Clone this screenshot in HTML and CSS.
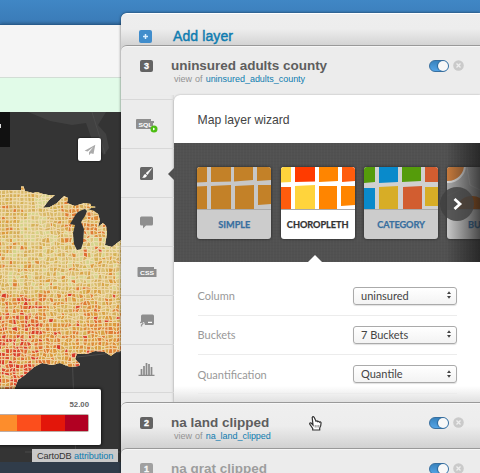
FILE: index.html
```html
<!DOCTYPE html>
<html lang="en">
<head>
<meta charset="utf-8">
<title>CartoDB</title>
<link rel="stylesheet" href="styles.css">
</head>
<body>
<svg class="defs" width="0" height="0">
  <symbol id="close" viewBox="0 0 11 11"><circle cx="5.5" cy="5.5" r="5.3" fill="#cacaca"/><path d="M3.5 3.5l4 4M7.5 3.5l-4 4" stroke="#eee" stroke-width="1.3"/></symbol>
  <symbol id="arrows" viewBox="0 0 4 8"><path d="M0 3l2-2.7L4 3zM0 5l2 2.7L4 5z" fill="#444"/></symbol>
</svg>
<div class="app">
  <main class="left">
    <div class="toolbar"></div>
    <div class="notice"></div>
    <div class="map">
      <svg class="tiles" viewBox="0 112 121 350" width="121" height="350">
        <defs><clipPath id="land"><path d="M-2 190H21L21 186.500H23.500L25 191L33 193L37 192L43 194L48 195H55L49 200L43 208L50 207L57 203L64 196L68 198L67 203L75 206L84 203L91 204L91 206L96 207L87 209L94 211L98 214L100 220L98 227L103 223L106 226L107 233L105 245L112 247L121 240V351L116 352L111 356L105 352L95 351L87 354L77 354L75 359L80 364L79 366L70 367L60 363L52 365L42 363L34 367L25 375L18 380L14 390H-2Z"/></clipPath></defs>
        <path d="M28 112L50 121L72 125L86 123L92 140L104 155L109 148L106 134L98 125L106 112Z" fill="#414141"/>
        <path d="M92 112L105 154M72 350L76 462M25 452H120M77 357L121 352" fill="none" stroke="#4b4b4b"/>
        <g clip-path="url(#land)"><path d="M0 180H121V390H0Z" fill="#f3dfb9"/><g id="counties"></g></g>
        <path d="M78 212L82 210L85 209L87 211L85 216L81 222L84 229L83 243L81 249L77 250L74 244L73 233L75 225L70 224L76 214Z" fill="#343434"/>
        <path d="M53 204L64 195L57 197L62 192" stroke="#343434" fill="none"/>
      </svg>
      <div class="tip"></div>
      <div class="share"><svg viewBox="0 0 12 12" width="12" height="12"><path d="M11.300.8L.6 6.800l3 .8L9.300 3 5 8.200v3l1.800-2 2.700.9z" fill="#aaa"/></svg></div>
      <div class="legend">
        <div class="max">52.00</div>
        <div class="ramp"><i class="r1"></i><i class="r2"></i><i class="r3"></i><i class="r4"></i></div>
      </div>
      <div class="credit">CartoDB <a>attribution</a></div>
    </div>
  </main>
  <aside class="panel">
    <div class="add"><span class="plus"><svg viewBox="0 0 13 13" width="13" height="13"><path d="M6.500 4v5M4 6.500h5" stroke="#d9efff" stroke-width="1.500"/></svg></span><span class="addtext">Add layer</span></div>
    <section class="layer open">
      <header class="head">
        <span class="num">3</span>
        <div class="name"><h2 class="t3">uninsured adults county</h2><p>view of <a class="a3">uninsured_adults_county</a></p></div>
        <span class="toggle"></span><svg class="x" width="11" height="11"><use href="#close"/></svg>
      </header>
      <div class="body">
        <nav class="tabs">
          <div class="tab"><svg viewBox="0 0 23 16" width="23" height="16"><path d="M2 2h14v2h3v2h-1v6H2a1 1 0 0 1-1-1V3a1 1 0 0 1 1-1z" fill="#8e8e8e"/><text class="code" x="3.500" y="9.500" textLength="14" lengthAdjust="spacingAndGlyphs">SQL</text><circle cx="19" cy="12" r="3.500" fill="#4cbd12"/><path d="M18 10.500v3l2.300-1.500z" fill="#fff"/></svg></div>
          <div class="tab on"><svg viewBox="0 0 13 13" width="13" height="13"><rect width="13" height="13" rx="1.500" fill="#666"/><path d="M11.500 1.600L7.500 7.600 6 6.300z" fill="#fff" stroke="#fff" stroke-width=".6"/><path d="M5.200 6.900l1.800 1.600c-.6 2.200-2.700 2.600-5 2.200 1.700-.8 1.300-3.100 3.200-3.800z" fill="#fff"/></svg></div>
          <div class="tab"><svg viewBox="0 0 13 13" width="13" height="13"><path d="M1.500.5h10a1.500 1.500 0 0 1 1.500 1.500v6a1.500 1.500 0 0 1-1.500 1.500H6l-3 3v-3H1.500A1.500 1.500 0 0 1 0 8V2A1.500 1.500 0 0 1 1.500.5z" fill="#8e8e8e"/></svg></div>
          <div class="tab"><svg viewBox="0 0 20 12" width="20" height="12"><path d="M1.500 1H17v2h2.500v8h-18Q.5 11 .5 10V2Q.5 1 1.500 1z" fill="#8e8e8e"/><text class="code" x="3" y="8.500" textLength="14" lengthAdjust="spacingAndGlyphs">CSS</text></svg></div>
          <div class="tab"><svg viewBox="0 0 16 13" width="16" height="13"><path d="M3.500.5h10Q15 .5 15 2v7.500q0 1.500-1.500 1.500H6L5 8H2V2Q2 .5 3.500.5z" fill="#8e8e8e"/><path d="M9 8.300h4" stroke="#fff" stroke-width="1.300"/><path d="M1 8.500q3-.5 3 1L2.500 11v1.500" fill="none" stroke="#999" stroke-width="1.300"/></svg></div>
          <div class="tab"><svg viewBox="0 0 17 14" width="17" height="14"><path d="M.5 13.500h16M3.500 13V7M6 13V4M8.500 13V1M11 13V2M13.500 13V5" stroke="#8a8a8a" stroke-width="1.700" fill="none"/></svg></div>
        </nav>
        <div class="content">
          <h3>Map layer wizard</h3>
          <div class="gallery">
            <div class="card dim"><svg viewBox="0 0 74 42"><rect width="74" height="42" fill="#c7c7c7"/><path d="M0 0h10v15l-10 .5zM14 0h20v14.500l-20 .5zM37 0h19v13l-19 1.500zM60 0h14v13l-14 1zM0 19.500l10-.5v23H0zM14 19l20-1v24H14zM38 19l19-1v24H38zM61 18h13v19l-13 1z" fill="#c38128"/></svg><b>SIMPLE</b></div>
            <div class="card"><svg viewBox="0 0 74 42"><rect width="74" height="42" fill="#fff"/><path d="M0 0h10v15l-10 .5zM14 19l20-1v24H14z" fill="#ffd43c"/><path d="M14 0h20v14.500l-20 .5z" fill="#ff3b00"/><path d="M0 20h10v22H0zM61 0h13v14l-13 1z" fill="#ff5c0d"/><path d="M38 0h19v14l-19 1zM38 19h18v23H38zM60 19h14v19l-14 1z" fill="#ff8500"/></svg><b>CHOROPLETH</b></div>
            <div class="card dim"><svg viewBox="0 0 74 42"><rect width="74" height="42" fill="#d0d0d0"/><path d="M0 0h11v15l-11 1zM38 0h19v14l-19 1z" fill="#559c0b"/><path d="M15 0h19v15l-19 1zM0 21h11v21H0z" fill="#098acb"/><path d="M61 0h13v15H61zM39 20l19-1v23H39z" fill="#d25d30"/><path d="M15 20l19-1v23H15zM61 20h13v19H61z" fill="#d7ad26"/></svg><b>CATEGORY</b></div>
            <div class="card dim"><svg viewBox="0 0 74 42"><rect width="74" height="42" fill="#aaa"/><circle r="17" cy="-2" cx="1" fill="#c97b3c" stroke="#ddd" stroke-width="2"/><ellipse cx="25" cy="40" rx="14" ry="11" fill="#b7611d"/><path d="M20 0l3 18 12 6M0 29l17-8" stroke="#bbb" fill="none"/></svg><b class="cut">BU</b></div>
            <span class="next"><svg viewBox="0 0 34 34" width="34" height="34"><path d="M14.500 12l5.500 5-5.500 5" fill="none" stroke="#fff" stroke-width="2.800"/></svg></span>
          </div>
          <div class="form">
            <div class="row"><label>Column</label><span class="select">uninsured<svg width="4" height="8"><use href="#arrows"/></svg></span></div>
            <div class="row"><label>Buckets</label><span class="select">7 Buckets<svg width="4" height="8"><use href="#arrows"/></svg></span></div>
            <div class="row"><label>Quantification</label><span class="select">Quantile<svg width="4" height="8"><use href="#arrows"/></svg></span></div>
          </div>
        </div>
      </div>
    </section>
    <section class="layer second">
      <header class="head">
        <span class="num">2</span>
        <div class="name"><h2 class="t2">na land clipped</h2><p>view of <a class="a2">na_land_clipped</a></p></div>
        <svg class="hand" viewBox="0 0 13 15" width="13" height="15"><path d="M4 9L2.200 7Q.5 6.500.7 8l3 4.500V14h7v-2q1.500-2 1.300-5.500-.8-1-1.500-.3-.5-1.200-1.700-.6-.6-1-1.800-.4L5.300 1.500Q4-.2 3.200 1.600z" fill="#fff" stroke="#333" stroke-width="1.200"/><path d="M6.200 9v2.500M8 9v2.500M9.800 9v2.500" stroke="#555" stroke-width=".7"/></svg>
        <span class="toggle"></span><svg class="x" width="11" height="11"><use href="#close"/></svg>
      </header>
    </section>
    <section class="layer third">
      <header class="head">
        <span class="num">1</span>
        <div class="name"><h2 class="t1">na grat clipped</h2></div>
        <span class="toggle"></span><svg class="x" width="11" height="11"><use href="#close"/></svg>
      </header>
    </section>
  </aside>
</div>
<script src="map.js"></script>
</body>
</html>
```
FILE: styles.css
```css
* { box-sizing: border-box; margin: 0; padding: 0; }
body { width: 480px; height: 473px; overflow: hidden; font-family: "Liberation Sans", sans-serif; background: #303c4a; }
.defs { display: block; height: 0; }
.app { display: grid; grid-template-columns: 121px 359px; height: 473px; background: linear-gradient(#4087c5, #3a7bb7 24px, #303c4a 25px); overflow: hidden; }
.left { padding-top: 24px; min-width: 0; }
.toolbar { height: 54px; background: #f5f5f5; border-top: 1px solid #275b8c; border-bottom: 1px solid #d2ddd5; width: 124px; box-shadow: 0 -1px 3px rgba(0,0,0,.25); }
.notice { height: 34px; background: #e1fbe8; width: 124px; }
.map { position: relative; height: 350px; width: 121px; background: #343434; overflow: hidden; }
.tiles { display: block; }
.tip { position: absolute; left: 0; top: 0; width: 10px; height: 35px; background: #111; }
.tip::before { content: ""; position: absolute; left: 0; top: 12px; width: 1px; height: 4px; background: #ddd; }
.share { position: absolute; left: 78px; top: 26px; width: 23px; height: 23px; background: #fff; border-radius: 2px; display: flex; align-items: center; justify-content: center; box-shadow: 0 0 2px #000; }
.legend { position: absolute; left: -3px; top: 277px; width: 104px; height: 56px; background: #fff; border-radius: 2px; padding: 11px 12px 0 3px; box-shadow: 0 0 3px 1px rgba(0,0,0,.6); }
.max { text-align: right; font-size: 7.8px; line-height: 10px; font-weight: bold; color: #666; }
.ramp { display: flex; height: 18px; margin-top: 4px; border: 1px solid rgba(90,50,30,.4); border-left: 0; border-radius: 0 2px 2px 0; }
.ramp i { flex: 0 0 24px; }
.ramp .r1 { flex-basis: 17px; background: #fd8d2c; }
.ramp .r2 { background: #fc4e1c; }
.ramp .r3 { background: #e3160a; }
.ramp .r4 { flex: 1; background: #b10022; }
.credit { position: absolute; left: 32px; top: 337px; width: 86px; height: 13px; background: #c9c9c9; color: #333; font-size: 9.2px; line-height: 14px; padding-left: 5px; white-space: nowrap; letter-spacing: -.1px; }
a { color: #0e7cb0; }

.panel { position: relative; margin-top: 13px; height: 460px; overflow: hidden; border-radius: 6px 0 0 0; background: #d6d6d6; box-shadow: 0 0 3px rgba(0,0,0,.6); }
.add { height: 40px; margin-bottom: -8px; padding: 0 0 0 18px; display: flex; align-items: flex-start; background: linear-gradient(#eee 0, #ededed 15px, #cfcfcf 34px); border-top: 1px solid #fff; border-radius: 6px 0 0 0; }
.plus { width: 13px; height: 13px; margin-top: 16px; border-radius: 2px; background: #408dcc; }
.plus svg { display: block; }
.addtext { margin: 12.500px 0 0 21px; font-size: 14px; line-height: 19px; color: #0e7cb0; -webkit-text-stroke: .45px #0e7cb0; letter-spacing: .1px; }
.layer { position: relative; background: #ececec; border-top: 1px solid #999; border-radius: 6px 0 0 0; box-shadow: inset 0 1px #f7f7f7; }
.head { display: flex; align-items: flex-start; height: 49px; padding: 13px 16px 0 19px; }
.num { width: 13px; height: 12px; margin-top: 1px; border-radius: 2px; background: #636363; color: #fff; font-size: 9px; line-height: 12.500px; font-weight: bold; text-align: center; -webkit-text-stroke: .3px #fff; }
.name { margin-left: 18px; flex: 1; }
h2 { font-size: 13.500px; line-height: 14px; color: #5e5e5e; white-space: nowrap; }
.t3 { letter-spacing: -.03px; }
p { margin: 0 0 0 3px; font-size: 9px; line-height: 13px; color: #939393; white-space: nowrap; word-spacing: .7px; letter-spacing: -.03px; }
.toggle { width: 20px; height: 12px; margin-top: 1px; border-radius: 6px; border: 1px solid #386f9f; background: linear-gradient(#3883be, #54a4e6); display: flex; justify-content: flex-end; }
.toggle::after { content: ""; width: 10px; height: 10px; border-radius: 50%; background: #f8f8f8; box-shadow: -1px 0 1px #2c6696; }
.x { margin: 1px 0 0 4px; }
.open { height: 365px; margin-bottom: -8px; }
.second { height: 54px; margin-bottom: -8px; background: linear-gradient(#efefef 0, #ededed 23px, #cfcfcf 47px); }
.third { height: 30px; }
.third .head { height: 29px; overflow: hidden; }
.third .num, .third h2 { opacity: .55; }
.hand { position: absolute; left: 188px; top: 13px; }

.body { display: grid; grid-template-columns: 53px 1fr; height: 308px; }
.tabs { padding-top: 4px; box-shadow: inset -3px 0 3px -2px #d5d5d5; overflow: hidden; }
.tab { position: relative; height: 49px; border-top: 1px solid #d8d8d8; display: flex; align-items: center; justify-content: center; padding: 1px 2px 0 0; }
.tab:last-child { border-bottom: 1px solid #d8d8d8; }
.code { font: bold 6px "Liberation Sans", sans-serif; fill: #fff; }
.on::after { content: ""; position: absolute; right: 0; top: 19px; border: 6px solid transparent; border-left: 0; border-right-color: #505050; }
.content { background: #fff; border-radius: 6px 0 0 0; box-shadow: 0 0 2px rgba(0,0,0,.3); overflow: hidden; }
h3 { height: 48px; padding: 1px 0 0 23.500px; font-size: 12.200px; line-height: 48px; font-weight: normal; color: #444; }
.gallery { position: relative; height: 119px; padding: 24px 0 0 23.300px; display: flex; gap: 9.400px; overflow: hidden; background-color: #515151; background-image: repeating-linear-gradient(90deg, rgba(255,255,255,.015) 0 1px, transparent 1px 3px), repeating-linear-gradient(rgba(0,0,0,.025) 0 1px, transparent 1px 3px); }
.gallery::before { content: ""; position: absolute; z-index: 1; right: 0; top: 0; width: 34px; height: 119px; background: linear-gradient(90deg, transparent, rgba(25,25,25,.72)); }
.gallery::after { content: ""; position: absolute; left: 134px; bottom: 0; border: 7px solid transparent; border-top: 0; border-bottom-color: #fff; }
.card { flex: 0 0 74px; height: 72px; border-radius: 3px; overflow: hidden; background: #fff; text-align: center; box-shadow: 0 0 3px #222; }
.card svg { display: block; width: 74px; height: 42px; }
.card b { display: block; height: 30px; border-top: 1px solid #aaa; font: bold 9.200px/29px Lato, sans-serif; color: #333; letter-spacing: -.05px; -webkit-text-stroke: .25px currentColor; }
.dim { background: #ccc; }
.dim b { color: #386f9f; }
.card .cut { text-align: left; padding-left: 20.500px; }
.next { position: absolute; z-index: 2; left: 266px; top: 44px; width: 34px; height: 34px; border-radius: 50%; background: rgba(64,64,64,.82); }
.form { height: 142px; padding: 14.500px 23px 0 23.500px; background: linear-gradient(#fff 0 124px, #ddd 142px); }
.row { height: 39.300px; display: flex; align-items: center; justify-content: space-between; border-bottom: 1px solid #ececec; font: 11px Lato, sans-serif; color: #999; }
.select { width: 104px; height: 18px; padding: 0 5px 1px 7px; display: flex; align-items: center; justify-content: space-between; border: 1px solid #aaa; border-radius: 3px; color: #444; background: linear-gradient(#fff, #f3f3f3); box-shadow: 0 1px 1px rgba(0,0,0,.12); }
```
FILE: map.js
```js
// Builds the county mesh: irregular quads sharing jittered corners.
(function () {
  let seed = 71;
  const rnd = () => (seed = (seed * 16807) % 2147483647) / 2147483647;
  const size = 3.7, cols = 34, rows = 57, pts = [];
  for (let r = 0; r <= rows; r++) {
    pts.push([]);
    for (let c = 0; c <= cols; c++) {
      const j = c < 11 && r < 24 ? 1.3 : 2.4;
      pts[r].push([c * size - 2 + (rnd() - .5) * j, 183 + r * size + (rnd() - .5) * j]);
    }
  }
  const pick = a => a[Math.floor(rnd() * a.length)];
  const tan = ['#d5b356', '#d9b968', '#d4ad58', '#dcc176'];
  const green = ['#d8d28c', '#d4d58c', '#d9c77c'];
  const orange = ['#dc9a3c', '#df7b34', '#dd8b39', '#d9a346'];
  const red = ['#dc4932', '#d83b2b', '#df6a32'];
  const near = (x, y, a, b, r) => Math.hypot(x - a, y - b) < r;
  let out = '';
  for (let r = 0; r < rows; r++) for (let c = 0; c < cols; c++) {
    const q = [pts[r][c], pts[r][c + 1], pts[r + 1][c + 1], pts[r + 1][c]];
    const x = q[0][0], y = q[0][1], k = rnd();
    let set;
    if (near(x, y, 41, 200, 8) || near(x, y, 33, 226, 15) && k < .7) set = green;
    else if (y < 292) {
      const warm = x > 58 && y < 240 ? .6 : x < 14 && y > 215 && y < 245 ? .35 : .13;
      set = k < warm ? orange : k > .75 && y > 230 ? green : tan;
      if (near(x, y, 90, 248, 9) && k < .3) set = red;
    } else {
      const hot = near(x, y, 32, 320, 10) || x < 32 && y > 335 ? .62 : x < 40 ? .28 : .07;
      set = k < hot ? red : k > (y < 310 ? .7 : .84) ? tan : orange;
      if (x > 45 && y < 320 && k > .5) set = tan;
    }
    out += '<polygon points="' + q.map(p => p[0].toFixed(1) + ',' + p[1].toFixed(1)).join(' ') +
      '" fill="' + pick(set) + '"/>';
  }
  const g = document.getElementById('counties');
  g.innerHTML = out;
  g.setAttribute('stroke', '#f2dfb8');
  g.setAttribute('stroke-width', '.8');
})();
```
